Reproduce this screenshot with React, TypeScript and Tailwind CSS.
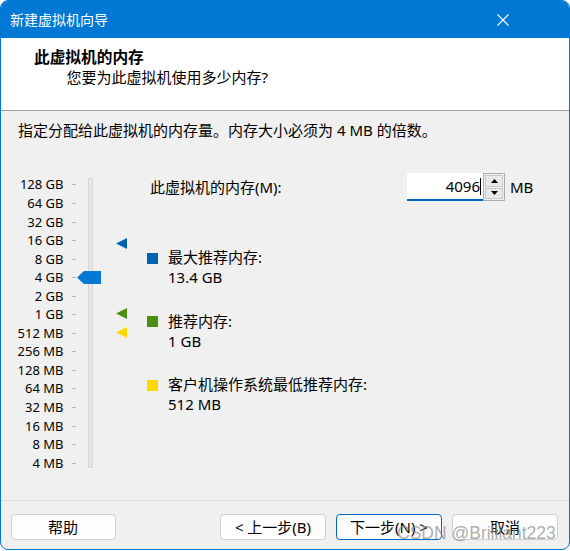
import React from 'react';

const scale = ['128 GB', '64 GB', '32 GB', '16 GB', '8 GB', '4 GB', '2 GB', '1 GB', '512 MB', '256 MB', '128 MB', '64 MB', '32 MB', '16 MB', '8 MB', '4 MB'];

const Arrow = ({ color }: { color: string }) => (
  <svg width="11" height="11" viewBox="0 0 11 11" className="block">
    <polygon points="0,5.5 11,0 11,11" fill={color} />
  </svg>
);

const App: React.FC = () => {
  return (
    <div className="w-[570px] h-[551px] bg-white font-[family-name:'Noto_Sans','Noto_Sans_CJK_SC',sans-serif] text-black">
      <div className="relative w-[570px] h-[550px] flex flex-col border border-[#0078d4] rounded-[8px] overflow-hidden bg-[#f0f0f0]">
        {/* Title bar */}
        <div className="h-[37px] shrink-0 bg-[#0078d4] flex items-center justify-between pl-[9px] pr-[60px]">
          <span className="text-white text-[14px] leading-none">新建虚拟机向导</span>
          <svg width="12" height="12" viewBox="0 0 12 12">
            <path d="M0.5 0.5 L11.5 11.5 M11.5 0.5 L0.5 11.5" stroke="#fff" strokeWidth="1.1" />
          </svg>
        </div>

        {/* Header */}
        <div className="h-[73px] shrink-0 bg-white border-b border-[#a0a0a0] pt-[9px]">
          <div className="pl-[33px] text-[15.7px] font-bold leading-[20px]">此虚拟机的内存</div>
          <div className="pl-[65.5px] text-[15px] leading-[21px]">您要为此虚拟机使用多少内存?</div>
        </div>

        {/* Body */}
        <div className="flex-1 flex flex-col">
          <div className="pt-[9px] pl-[17px] text-[15px] leading-[20px]">指定分配给此虚拟机的内存量。内存大小必须为 4 MB 的倍数。</div>

          <div className="flex flex-1">
            {/* Scale labels */}
            <div className="w-[75px] pt-[35.7px] flex flex-col">
              {scale.map((s) => (
                <div key={s} className="h-[18.55px] flex items-center justify-end">
                  <span className="text-[13px] leading-none">{s}</span>
                  <span className="ml-[8.5px] w-[4px] h-px bg-[#b4b4b4]" />
                </div>
              ))}
            </div>

            {/* Track */}
            <div className="ml-[12px] mt-[38px] relative w-[5px] h-[290px] bg-[#e6e6e6] border border-[#d6d6d6]">
              <svg width="24" height="13" viewBox="0 0 24 13" className="absolute left-[-12px] top-[92px]">
                <polygon points="0,6.5 7,0 24,0 24,13 7,13" fill="#0078d4" />
              </svg>
            </div>

            {/* Markers */}
            <div className="relative w-[54px]">
              <div className="absolute left-[23px] top-[98px]"><Arrow color="#0063b1" /></div>
              <div className="absolute left-[23px] top-[168px]"><Arrow color="#4a8f0f" /></div>
              <div className="absolute left-[23px] top-[187px]"><Arrow color="#ffd800" /></div>
            </div>

            {/* Right column */}
            <div className="flex-1 flex flex-col pt-[33px]">
              <div className="flex items-center h-[28px]">
                <span className="w-[260px] pl-[3px] text-[15px]">此虚拟机的内存(M):</span>
                <div className="w-[76px] h-[28px] bg-white border-b-2 border-[#0067c0] flex items-center justify-end pr-[2px]">
                  <span className="text-[15px] leading-none">4096</span>
                  <span className="w-px h-[17px] bg-black" />
                </div>
                <div className="w-[22px] h-[28px] border border-[#adadad] bg-[#f0f0f0] flex flex-col p-px gap-px">
                  <div className="flex-1 bg-[#e9e9e9] border border-[#c8c8c8] flex items-center justify-center">
                    <svg width="7" height="4" viewBox="0 0 7 4"><polygon points="3.5,0 7,4 0,4" fill="#000" /></svg>
                  </div>
                  <div className="flex-1 bg-[#e9e9e9] border border-[#c8c8c8] flex items-center justify-center">
                    <svg width="7" height="4" viewBox="0 0 7 4"><polygon points="0,0 7,0 3.5,4" fill="#000" /></svg>
                  </div>
                </div>
                <span className="ml-[5px] text-[15px]">MB</span>
              </div>

              <div className="mt-[46px] flex flex-col gap-[23.5px]">
                <div className="flex">
                  <span className="mt-[5.5px] w-[11px] h-[11px] bg-[#0063b1]" />
                  <div className="ml-[10px] text-[15px] leading-[20px]">
                    <div>最大推荐内存:</div>
                    <div>13.4 GB</div>
                  </div>
                </div>
                <div className="flex">
                  <span className="mt-[5.5px] w-[11px] h-[11px] bg-[#4a8f0f]" />
                  <div className="ml-[10px] text-[15px] leading-[20px]">
                    <div>推荐内存:</div>
                    <div>1 GB</div>
                  </div>
                </div>
                <div className="flex">
                  <span className="mt-[5.5px] w-[11px] h-[11px] bg-[#ffd800]" />
                  <div className="ml-[10px] text-[15px] leading-[20px]">
                    <div>客户机操作系统最低推荐内存:</div>
                    <div>512 MB</div>
                  </div>
                </div>
              </div>
            </div>
          </div>

          {/* Footer */}
          <div className="border-t border-[#dcdcdc] pt-[13px] pb-[9px] pl-[9.5px] pr-[11px] flex items-center text-[15px]">
            <button className="w-[105px] h-[26px] bg-[#fdfdfd] border border-[#d0d0d0] rounded-[4px]">帮助</button>
            <div className="flex-1" />
            <div className="flex gap-[10px]">
              <button className="w-[106px] h-[26px] bg-[#fdfdfd] border border-[#d0d0d0] rounded-[4px]">&lt; 上一步(B)</button>
              <button className="w-[106px] h-[26px] bg-[#fdfdfd] border border-[#0067c0] rounded-[4px]">下一步(N) &gt;</button>
              <button className="w-[106px] h-[26px] bg-[#fdfdfd] border border-[#d0d0d0] rounded-[4px]">取消</button>
            </div>
          </div>
        </div>

        {/* Watermark */}
        <span className="absolute left-[396px] top-[520px] text-[17.5px] leading-[24px] text-[#8a8a8a]/70 font-[family-name:'Liberation_Sans',sans-serif] pointer-events-none">CSDN @Brilliant223</span>
      </div>
    </div>
  );
};

export default App;
